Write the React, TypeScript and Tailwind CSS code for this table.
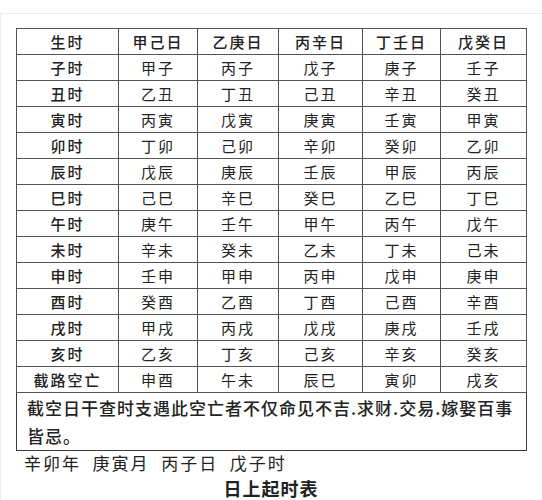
const heads = ["生时", "甲己日", "乙庚日", "丙辛日", "丁壬日", "戊癸日"];

const rows: string[][] = [
  ["子时", "甲子", "丙子", "戊子", "庚子", "壬子"],
  ["丑时", "乙丑", "丁丑", "己丑", "辛丑", "癸丑"],
  ["寅时", "丙寅", "戊寅", "庚寅", "壬寅", "甲寅"],
  ["卯时", "丁卯", "己卯", "辛卯", "癸卯", "乙卯"],
  ["辰时", "戊辰", "庚辰", "壬辰", "甲辰", "丙辰"],
  ["巳时", "己巳", "辛巳", "癸巳", "乙巳", "丁巳"],
  ["午时", "庚午", "壬午", "甲午", "丙午", "戊午"],
  ["未时", "辛未", "癸未", "乙未", "丁未", "己未"],
  ["申时", "壬申", "甲申", "丙申", "戊申", "庚申"],
  ["酉时", "癸酉", "乙酉", "丁酉", "己酉", "辛酉"],
  ["戌时", "甲戌", "丙戌", "戊戌", "庚戌", "壬戌"],
  ["亥时", "乙亥", "丁亥", "己亥", "辛亥", "癸亥"],
  ["截路空亡", "申酉", "午未", "辰巳", "寅卯", "戌亥"],
];

const widths = ["w-[102px]", "w-[79px]", "w-[81px]", "w-[84px]", "w-[78px]", "w-[86px]"];

export default function App() {
  return (
    <div className="w-[542px] h-[500px] bg-white overflow-hidden text-[#222] font-['KaiTi','Noto_Sans_CJK_SC',sans-serif]">
      <div className="mt-[13px] h-[487px] border-t border-l border-[#ededed] pt-[14px] pl-[15px]">
        <table className="w-[510px] table-fixed border-collapse border border-[#3a3a3a] text-[15px] leading-none">
          <colgroup>
            {widths.map((w, i) => (
              <col key={i} className={w} />
            ))}
          </colgroup>
          <tbody>
            <tr className="h-[26px]">
              {heads.map((h) => (
                <td key={h} className="h-[26px] p-0 border border-[#555] text-center font-medium tracking-[2px]">
                  {h}
                </td>
              ))}
            </tr>
            {rows.map((r) => (
              <tr key={r[0]} className="h-[26px]">
                {r.map((c, i) => (
                  <td
                    key={i}
                    className={`h-[26px] p-0 border border-[#555] text-center tracking-[2px] ${i === 0 ? "font-medium" : ""}`}
                  >
                    {c}
                  </td>
                ))}
              </tr>
            ))}
            <tr className="h-[55px]">
              <td colSpan={6} className="h-[55px] border border-[#3a3a3a] px-[10px] pt-[1px] pb-0 text-[17px] leading-[28px] tracking-[1px] font-medium">
                截空日干查时支遇此空亡者不仅命见不吉.求财.交易.嫁娶百事皆忌。
              </td>
            </tr>
          </tbody>
        </table>
        <p className="pl-[8px] text-[17px] leading-[24px] tracking-[2px] whitespace-pre">
          辛卯年  庚寅月  丙子日  戊子时
        </p>
        <p className="w-[510px] text-center text-[18px] leading-[26px] font-bold tracking-[1px]">
          日上起时表
        </p>
      </div>
    </div>
  );
}
